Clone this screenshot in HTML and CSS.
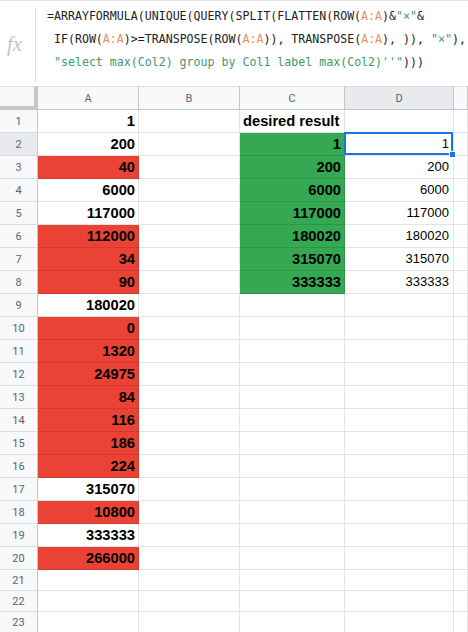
FILE: index.html
```html
<!DOCTYPE html>
<html>
<head>
  <meta charset="UTF-8">
  <title>Sheet - desired result</title>
  <link rel="stylesheet" href="styles.css">
</head>
<body>

  <!-- Formula bar -->
  <div class="formula-bar">
    <div class="fx">fx</div>
    <div class="formula">
      <div class="fline">=ARRAYFORMULA(UNIQUE(QUERY(SPLIT(FLATTEN(ROW(<span class="rng">A:A</span>)&amp;<span class="str">"×"</span>&amp;</div>
      <div class="fline"> IF(ROW(<span class="rng">A:A</span>)&gt;=TRANSPOSE(ROW(<span class="rng">A:A</span>)), TRANSPOSE(<span class="rng">A:A</span>), )), <span class="str">"×"</span>),</div>
      <div class="fline"> <span class="str">"select max(Col2) group by Col1 label max(Col2)''"</span>)))</div>
    </div>
  </div>

  <!-- Grid -->
  <div class="sheet">
    <div class="row head">
      <div class="corner"></div>
      <div class="ch">A</div>
      <div class="ch">B</div>
      <div class="ch">C</div>
      <div class="ch sel">D</div>
      <div class="ch"></div>
    </div>

    <div class="row">
      <div class="rh">1</div>
      <div class="cell">1</div>
      <div class="cell"></div>
      <div class="cell left">desired result</div>
      <div class="cell"></div>
      <div class="cell"></div>
    </div>
    <div class="row">
      <div class="rh sel">2</div>
      <div class="cell">200</div>
      <div class="cell"></div>
      <div class="cell green">1</div>
      <div class="cell plain active">1</div>
      <div class="cell"></div>
    </div>
    <div class="row">
      <div class="rh">3</div>
      <div class="cell red">40</div>
      <div class="cell"></div>
      <div class="cell green">200</div>
      <div class="cell plain">200</div>
      <div class="cell"></div>
    </div>
    <div class="row">
      <div class="rh">4</div>
      <div class="cell">6000</div>
      <div class="cell"></div>
      <div class="cell green">6000</div>
      <div class="cell plain">6000</div>
      <div class="cell"></div>
    </div>
    <div class="row">
      <div class="rh">5</div>
      <div class="cell">117000</div>
      <div class="cell"></div>
      <div class="cell green">117000</div>
      <div class="cell plain">117000</div>
      <div class="cell"></div>
    </div>
    <div class="row">
      <div class="rh">6</div>
      <div class="cell red">112000</div>
      <div class="cell"></div>
      <div class="cell green">180020</div>
      <div class="cell plain">180020</div>
      <div class="cell"></div>
    </div>
    <div class="row">
      <div class="rh">7</div>
      <div class="cell red">34</div>
      <div class="cell"></div>
      <div class="cell green">315070</div>
      <div class="cell plain">315070</div>
      <div class="cell"></div>
    </div>
    <div class="row">
      <div class="rh">8</div>
      <div class="cell red">90</div>
      <div class="cell"></div>
      <div class="cell green">333333</div>
      <div class="cell plain">333333</div>
      <div class="cell"></div>
    </div>
    <div class="row">
      <div class="rh">9</div>
      <div class="cell">180020</div>
      <div class="cell"></div><div class="cell"></div><div class="cell"></div><div class="cell"></div>
    </div>
    <div class="row">
      <div class="rh">10</div>
      <div class="cell red">0</div>
      <div class="cell"></div><div class="cell"></div><div class="cell"></div><div class="cell"></div>
    </div>
    <div class="row">
      <div class="rh">11</div>
      <div class="cell red">1320</div>
      <div class="cell"></div><div class="cell"></div><div class="cell"></div><div class="cell"></div>
    </div>
    <div class="row">
      <div class="rh">12</div>
      <div class="cell red">24975</div>
      <div class="cell"></div><div class="cell"></div><div class="cell"></div><div class="cell"></div>
    </div>
    <div class="row">
      <div class="rh">13</div>
      <div class="cell red">84</div>
      <div class="cell"></div><div class="cell"></div><div class="cell"></div><div class="cell"></div>
    </div>
    <div class="row">
      <div class="rh">14</div>
      <div class="cell red">116</div>
      <div class="cell"></div><div class="cell"></div><div class="cell"></div><div class="cell"></div>
    </div>
    <div class="row">
      <div class="rh">15</div>
      <div class="cell red">186</div>
      <div class="cell"></div><div class="cell"></div><div class="cell"></div><div class="cell"></div>
    </div>
    <div class="row">
      <div class="rh">16</div>
      <div class="cell red">224</div>
      <div class="cell"></div><div class="cell"></div><div class="cell"></div><div class="cell"></div>
    </div>
    <div class="row">
      <div class="rh">17</div>
      <div class="cell">315070</div>
      <div class="cell"></div><div class="cell"></div><div class="cell"></div><div class="cell"></div>
    </div>
    <div class="row">
      <div class="rh">18</div>
      <div class="cell red">10800</div>
      <div class="cell"></div><div class="cell"></div><div class="cell"></div><div class="cell"></div>
    </div>
    <div class="row">
      <div class="rh">19</div>
      <div class="cell">333333</div>
      <div class="cell"></div><div class="cell"></div><div class="cell"></div><div class="cell"></div>
    </div>
    <div class="row">
      <div class="rh">20</div>
      <div class="cell red">266000</div>
      <div class="cell"></div><div class="cell"></div><div class="cell"></div><div class="cell"></div>
    </div>
    <div class="row short">
      <div class="rh">21</div>
      <div class="cell"></div><div class="cell"></div><div class="cell"></div><div class="cell"></div><div class="cell"></div>
    </div>
    <div class="row short">
      <div class="rh">22</div>
      <div class="cell"></div><div class="cell"></div><div class="cell"></div><div class="cell"></div><div class="cell"></div>
    </div>
    <div class="row short">
      <div class="rh">23</div>
      <div class="cell"></div><div class="cell"></div><div class="cell"></div><div class="cell"></div><div class="cell"></div>
    </div>
  </div>

</body>
</html>
```

FILE: styles.css
```css
/* Page */
body {
  margin: 0;
  width: 468px;
  height: 632px;
  overflow: hidden;
  background: #fff;
  font-family: "Liberation Sans", Arial, sans-serif;
}

/* Formula bar */
.formula-bar {
  display: flex;
  height: 86px;
  box-sizing: border-box;
  border-top: 1px solid #e3e3e3;
}

.fx {
  width: 36px;
  flex: none;
  box-sizing: border-box;
  margin: 6px 0 4px;
  padding-right: 6px;
  border-right: 1px solid #dadce0;
  display: flex;
  align-items: center;
  justify-content: center;
  font: italic 21px "Liberation Serif", serif;
  color: #c4c4c4;
}

.formula {
  min-width: 0;
  padding: 4px 0 0 11px;
  overflow: hidden;
  font: 11.6px "DejaVu Sans Mono", monospace;
  color: #222;
}

.fline {
  height: 23px;
  line-height: 23px;
  white-space: pre;
}

.rng {
  color: #ee8d5c;
}

.str {
  color: #3d9a6c;
}

/* Grid */
.row {
  display: grid;
  grid-template-columns: 38px 101px 101px 105px 109px 1fr;
  height: 23px;
}

.row.head {
  height: 24px;
}

.row.short {
  height: 21px;
}

.row > div {
  box-sizing: border-box;
  min-width: 0;
  white-space: nowrap;
}

/* Headers */
.corner {
  background: #f8f9fa;
  border-right: 4px solid #c4c7c5;
  border-bottom: 4px solid #c4c7c5;
  border-top: 1px solid #dadce0;
}

.ch {
  background: #f8f9fa;
  border-top: 1px solid #dadce0;
  border-right: 1px solid #c4c7c5;
  border-bottom: 1px solid #c4c7c5;
  display: flex;
  align-items: center;
  justify-content: center;
  padding-top: 1px;
  font: 11px Roboto, "Liberation Sans", sans-serif;
  color: #5f6368;
}

.rh {
  background: #f8f9fa;
  border-right: 1px solid #c4c7c5;
  border-bottom: 1px solid #dadce0;
  display: flex;
  align-items: center;
  justify-content: center;
  font: 11px Roboto, "Liberation Sans", sans-serif;
  color: #5f6368;
}

.sel {
  background: #e8eaed;
}

/* Cells */
.cell {
  border-right: 1px solid rgba(0, 0, 0, 0.11);
  border-bottom: 1px solid rgba(0, 0, 0, 0.11);
  display: flex;
  align-items: flex-end;
  justify-content: flex-end;
  padding: 0 3px 2px;
  font-weight: bold;
  font-size: 14.7px;
  line-height: 18px;
  color: #000;
}

.left {
  justify-content: flex-start;
}

.plain {
  font-weight: normal;
  font-size: 13px;
  padding-right: 4px;
}

.red {
  background: #ea4335;
}

.green {
  background: #34a853;
}

/* Selected cell with fill handle */
.active {
  position: relative;
}

.active::after {
  content: "";
  position: absolute;
  top: -1px;
  left: -1px;
  right: 0;
  bottom: 0;
  border: 2px solid #1a73e8;
}

.active::before {
  content: "";
  position: absolute;
  right: -3px;
  bottom: -3px;
  width: 5px;
  height: 5px;
  background: #1a73e8;
  border: 1px solid #fff;
  z-index: 2;
}
```
